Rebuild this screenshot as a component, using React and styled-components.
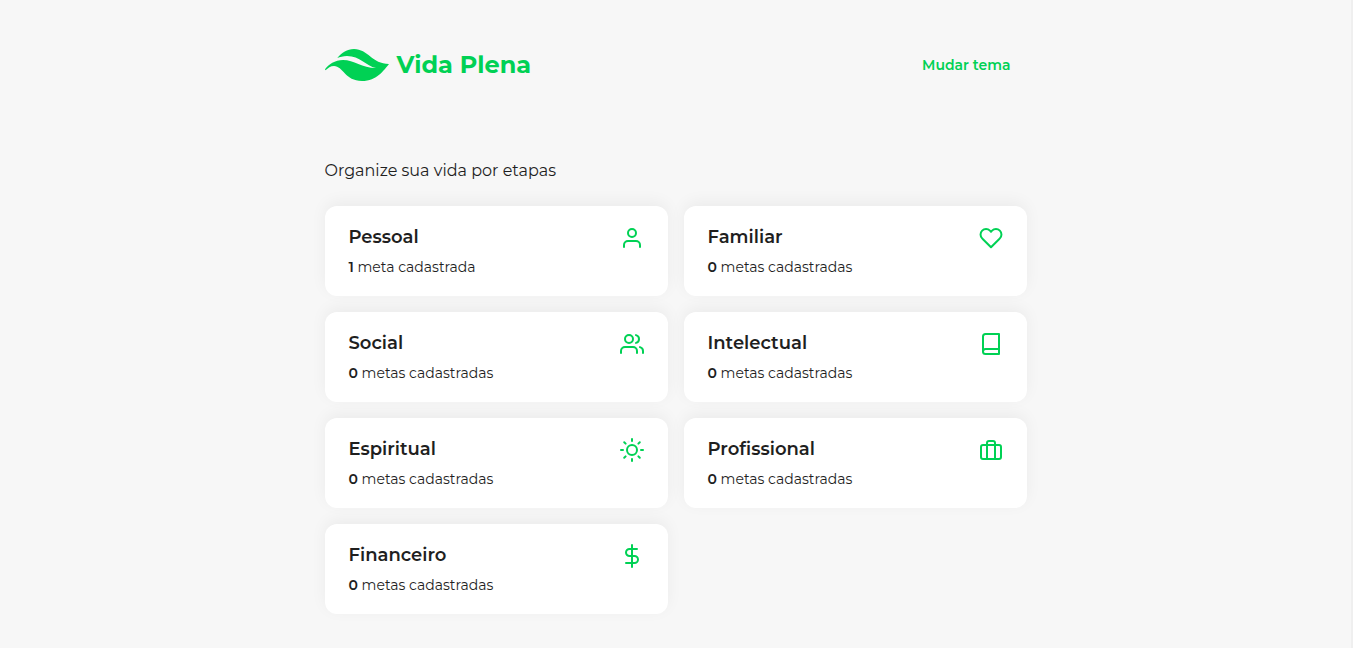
import React, { useState } from "react";
import styled, { createGlobalStyle, ThemeProvider } from "styled-components";
import {
  FiUser,
  FiHeart,
  FiUsers,
  FiBook,
  FiSun,
  FiBriefcase,
  FiDollarSign,
} from "react-icons/fi";

const light = {
  background: "#f7f7f7",
  card: "#ffffff",
  text: "#1f1f1f",
  primary: "#00d154",
  edge: "#efefef",
};

const dark = {
  background: "#1b1b1b",
  card: "#262626",
  text: "#f2f2f2",
  primary: "#00d154",
  edge: "#2c2c2c",
};

const areas = [
  { name: "Pessoal", goals: 1, icon: FiUser },
  { name: "Familiar", goals: 0, icon: FiHeart },
  { name: "Social", goals: 0, icon: FiUsers },
  { name: "Intelectual", goals: 0, icon: FiBook },
  { name: "Espiritual", goals: 0, icon: FiSun },
  { name: "Profissional", goals: 0, icon: FiBriefcase },
  { name: "Financeiro", goals: 0, icon: FiDollarSign },
];

const GlobalStyle = createGlobalStyle`
  * { box-sizing: border-box; margin: 0; padding: 0; }
  body {
    background: ${({ theme }) => theme.background};
    color: ${({ theme }) => theme.text};
    font-family: Montserrat, Inter, sans-serif;
    font-size: 16px;
  }
`;

const Page = styled.div`
  min-height: 100vh;
  border-right: 2px solid ${({ theme }) => theme.edge};
`;

const Container = styled.div`
  max-width: 750px;
  margin: 0 auto;
  padding: 0 24px 32px;
`;

const Header = styled.header`
  display: flex;
  align-items: center;
  justify-content: space-between;
  padding: 45px 0;
`;

const Brand = styled.a`
  display: flex;
  align-items: center;
  gap: 8px;
  color: ${({ theme }) => theme.primary};
  font-size: 24px;
  font-weight: 700;
  line-height: 40px;
  text-decoration: none;
`;

const ThemeButton = styled.button`
  border: 0;
  background: none;
  padding: 8px 16px;
  color: ${({ theme }) => theme.primary};
  font: inherit;
  font-size: 14px;
  font-weight: 600;
  line-height: 24px;
  cursor: pointer;
`;

const Intro = styled.p`
  margin: 29px 0 23px;
  line-height: 24px;
`;

const Grid = styled.main`
  display: grid;
  grid-template-columns: repeat(2, 1fr);
  gap: 16px;

  @media (max-width: 600px) {
    grid-template-columns: 1fr;
  }
`;

const Card = styled.a`
  display: flex;
  align-items: flex-start;
  justify-content: space-between;
  padding: 20px 24px;
  border-radius: 12px;
  background: ${({ theme }) => theme.card};
  box-shadow: 0 -4px 16px rgba(0, 0, 0, 0.05);
  color: inherit;
  text-decoration: none;

  svg {
    color: ${({ theme }) => theme.primary};
  }
`;

const CardTitle = styled.h2`
  margin-bottom: 10px;
  font-size: 18px;
  font-weight: 600;
  line-height: 22px;
`;

const CardText = styled.p`
  font-size: 14px;
  line-height: 18px;

  strong {
    font-weight: 600;
  }
`;

function Logo() {
  return (
    <svg width="64" height="32" viewBox="0 0 64 32" fill="currentColor" aria-hidden="true">
      <path d="M12.3 9C17 3.500 22 0 29 0C43 0 47 15 64 15C59 21 52 32 37 32C20 32 18 17 9 17C5.500 17 3 19 0.500 21.300L0 20.300C3.500 15.500 10 11 18 11C29 11 37 19 51 19C41 17 35 7 22 7C18 7 15 8 12.300 9Z" />
    </svg>
  );
}

export default function App() {
  const [isDark, setIsDark] = useState(false);
  return (
    <ThemeProvider theme={isDark ? dark : light}>
      <GlobalStyle />
      <Page>
        <Container>
          <Header>
            <Brand href="#">
              <Logo />
              Vida Plena
            </Brand>
            <ThemeButton type="button" onClick={() => setIsDark(!isDark)}>
              Mudar tema
            </ThemeButton>
          </Header>
          <Intro>Organize sua vida por etapas</Intro>
          <Grid>
            {areas.map(({ name, goals, icon: Icon }) => (
              <Card key={name} href={`#${name.toLowerCase()}`}>
                <div>
                  <CardTitle>{name}</CardTitle>
                  <CardText>
                    <strong>{goals}</strong>{" "}
                    {goals === 1 ? "meta cadastrada" : "metas cadastradas"}
                  </CardText>
                </div>
                <Icon size={24} aria-hidden="true" />
              </Card>
            ))}
          </Grid>
        </Container>
      </Page>
    </ThemeProvider>
  );
}
